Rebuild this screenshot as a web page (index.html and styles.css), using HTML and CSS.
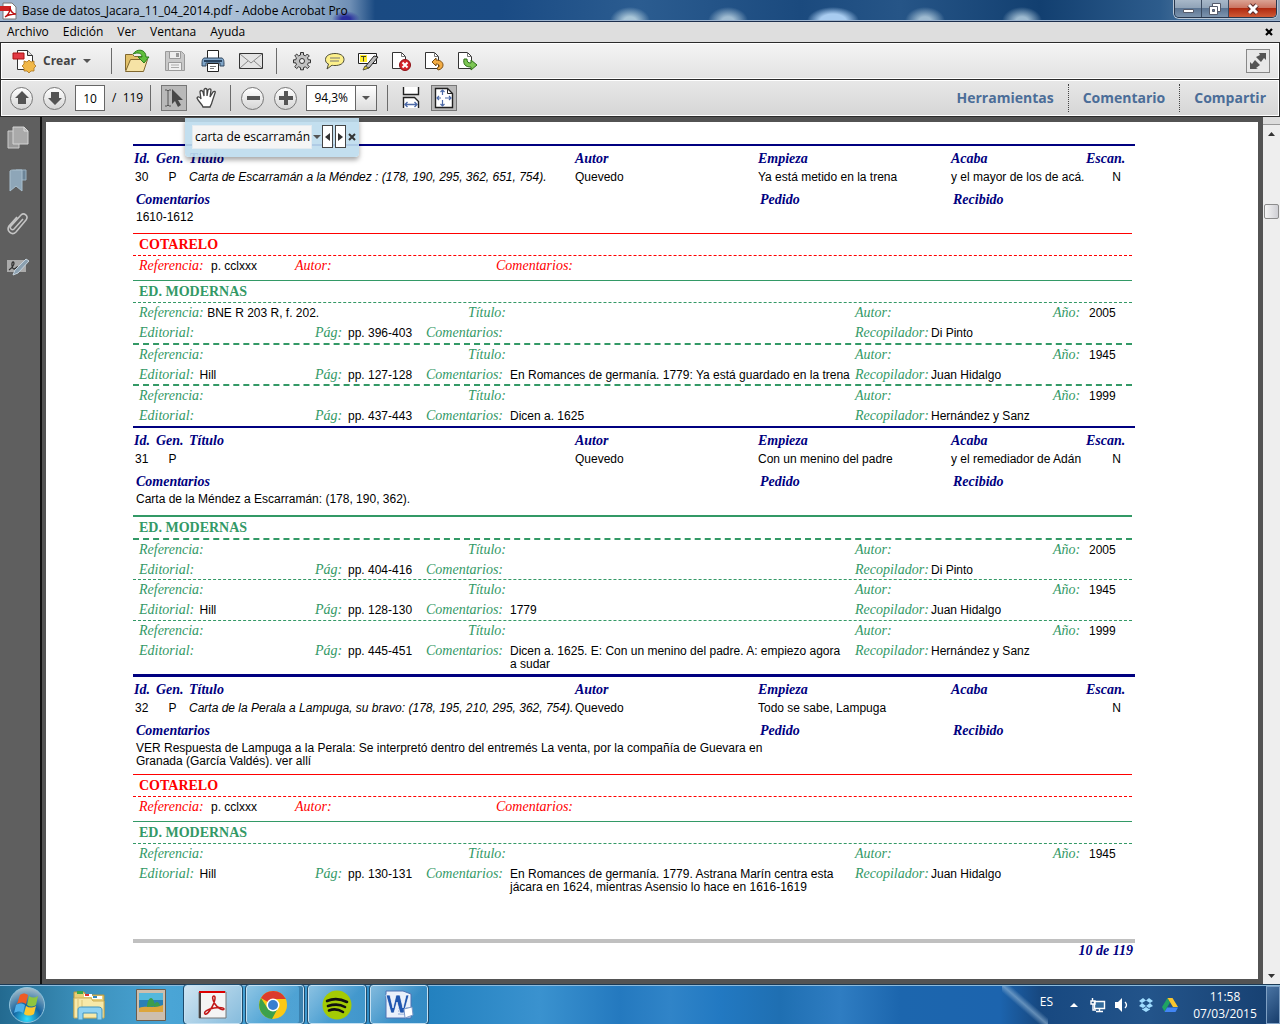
FILE: index.html
```html
<!DOCTYPE html>
<html lang="es">
<head>
  <meta charset="utf-8">
  <title>Base de datos_Jacara_11_04_2014.pdf - Adobe Acrobat Pro</title>
  <link rel="stylesheet" href="styles.css">
</head>
<body>
  <header class="titlebar">
    <svg class="app-icon" width="18" height="18" viewBox="0 0 18 18"><path d="M3 1h9l4 4v12H3z" fill="#fff" stroke="#777"/><path d="M0 4h11v5H0z" fill="#c22"/><path d="M5 15c3-2 5-6 5-9 1 4 3 6 6 6-4 0-8 1-11 3z" fill="none" stroke="#b11" stroke-width="1.4"/></svg>
    <span class="window-title">Base de datos_Jacara_11_04_2014.pdf - Adobe Acrobat Pro</span>
    <div class="window-buttons">
      <button class="win" aria-label="Minimizar"><svg width="14" height="12" viewBox="0 0 14 12"><path d="M2.500 6.500h10v3h-10z" fill="#fff" stroke="#555b6b"/></svg></button>
      <button class="win" aria-label="Restaurar"><svg width="14" height="14" viewBox="0 0 14 14"><path d="M4.500 1.500h8v8h-8z" fill="#fff" stroke="#555b6b"/><path d="M1.500 4.500h8v8h-8z" fill="#fff" stroke="#555b6b"/><path d="M4.500 7.500h2v2h-2z" fill="#68809f" stroke="#555b6b"/></svg></button>
      <button class="win win-close" aria-label="Cerrar"><svg width="14" height="12" viewBox="0 0 14 12"><path d="M3 2l8 8M11 2l-8 8" stroke="#5a2a2a" stroke-width="5"/><path d="M3 2l8 8M11 2l-8 8" stroke="#fff" stroke-width="3"/></svg></button>
    </div>
  </header>

  <nav class="menubar">
    <button>Archivo</button>
    <button>Edición</button>
    <button>Ver</button>
    <button>Ventana</button>
    <button>Ayuda</button>
    <button class="menu-close" aria-label="Cerrar documento"><svg width="8" height="8" viewBox="0 0 8 8"><path d="M1 1l6 6M7 1l-6 6" stroke="#000" stroke-width="2.200"/></svg></button>
  </nav>

  <div class="toolbar toolbar-main">
    <button class="create">
      <svg width="24" height="24" viewBox="0 0 24 24"><path d="M5.500 1.500h10l5 5v14h-15z" fill="#fff" stroke="#333"/><path d="M15.500 1.500v5h5" fill="#ddd" stroke="#333"/><path d="M1 4h11v6H1z" fill="#e23a44" stroke="#a11"/><path d="M17 11l2 2 3-1 0 3 2 2-2 2 0 3-3 0-2 2-2-2-3 0 0-3-2-2 2-2 0-3 3 1z" fill="#f1b848" stroke="#a87420" stroke-width=".8"/></svg>
      <span>Crear</span>
      <i class="caret"></i>
    </button>
    <i class="sep"></i>
    <div class="tools wide">
      <button aria-label="Abrir"><svg width="26" height="24" viewBox="0 0 26 24"><path d="M1.500 21V5.500h7l2 2h9V21z" fill="#e3c26a" stroke="#80672e"/><path d="M1.500 22.500l5-12h17l-4 12z" fill="#f6e3a5" stroke="#80672e"/><path d="M9 5c4-6 13-5 13 3h3l-5 6-6-6h4c0-4-4-5-9-3z" fill="#5fbf3c" stroke="#2b7a1c"/></svg></button>
      <button aria-label="Guardar"><svg width="22" height="22" viewBox="0 0 22 22"><path d="M1.500 1.500h16l3 3v16h-19z" fill="#c9c9c9" stroke="#9a9a9a"/><path d="M5.500 1.500h11v7h-11z" fill="#eee" stroke="#9a9a9a"/><path d="M12 3h3v4h-3z" fill="#999"/><path d="M4.500 12.500h13v8h-13z" fill="#f0f0f0" stroke="#9a9a9a"/><path d="M7 15h8M7 17.500h8" stroke="#aaa"/></svg></button>
      <button aria-label="Imprimir"><svg width="24" height="24" viewBox="0 0 24 24"><path d="M6.500 1.500h11v9h-11z" fill="#fff" stroke="#222"/><path d="M3 9h18c2 1 2 3 2 8h-4v-3H5v3H1c0-5 0-7 2-8z" fill="#7fa5c8" stroke="#31475f"/><path d="M3 12h18" stroke="#29435f" stroke-width="2"/><path d="M6.500 14.500h11v8h-11z" fill="#fff" stroke="#222"/><path d="M9 17.500h6M9 19.500h4" stroke="#777"/></svg></button>
      <button aria-label="Correo"><svg width="26" height="18" viewBox="0 0 26 18"><path d="M1.500 1.500h23v15h-23z" fill="#e4e4e4" stroke="#333"/><path d="M2 2l11 9 11-9M2 16l8-7M24 16l-8-7" fill="none" stroke="#888"/></svg></button>
    </div>
    <i class="sep"></i>
    <div class="tools">
      <button aria-label="Preferencias"><svg width="20" height="20" viewBox="0 0 20 20"><path d="M8.500 1.500h3v2.500l2 .8 1.800-1.800 2 2-1.800 1.800.8 2h2.200v3h-2.200l-.8 2 1.800 1.800-2 2-1.800-1.800-2 .8v2.200h-3v-2.200l-2-.8-1.800 1.800-2-2 1.800-1.800-.8-2H1.500v-3h2.200l.8-2-1.800-1.800 2-2 1.800 1.800 2-.8z" fill="#c2c2c2" stroke="#333"/><circle cx="10" cy="10" r="2.500" fill="#eee" stroke="#333"/></svg></button>
      <button aria-label="Nota"><svg width="22" height="18" viewBox="0 0 22 18"><path d="M11 1.500c5 0 9 2 9 6s-4 6-9 6c-1.500 0-2 0-3-.3L3 17l1.500-5C2 11 1.500 9.500 1.500 7.500c0-4 4.500-6 9.500-6z" fill="#fdf08a" stroke="#4c4c38"/><path d="M6 6h10M6 9h9" stroke="#777"/></svg></button>
      <button aria-label="Resaltar"><svg width="22" height="20" viewBox="0 0 22 20"><path d="M1.500 2.500h18v10h-18z" fill="#fff" stroke="#222"/><path d="M3 4h7v7H3z" fill="#ffee2b"/><path d="M4 5.500h5M6.500 5.500v5" stroke="#443"/><path d="M8 16l9-11 4 1-9 11z" fill="#bbb" stroke="#222"/><path d="M6 19l2-4 4 2z" fill="#e8d028" stroke="#554"/></svg></button>
      <button aria-label="Eliminar página"><svg width="20" height="20" viewBox="0 0 20 20"><path d="M1.500 1.500h9l4 4v12h-13z" fill="#fff" stroke="#333"/><path d="M10.500 1.500v4h4" fill="none" stroke="#777"/><circle cx="14" cy="14" r="5.500" fill="#d6222a" stroke="#8c1217"/><path d="M11.500 11.500l5 5M16.500 11.500l-5 5" stroke="#fff" stroke-width="2"/></svg></button>
      <button aria-label="Girar página"><svg width="20" height="20" viewBox="0 0 20 20"><path d="M1.500 1.500h9l4 4v12h-13z" fill="#fff" stroke="#333"/><path d="M10.500 1.500v4h4" fill="none" stroke="#777"/><path d="M8 11l4-4v2c9 0 9 9 2 10l-1-2c3-1 3-4-1-4v2z" fill="#f3ad45" stroke="#7b4d10"/></svg></button>
      <button aria-label="Extraer página"><svg width="20" height="20" viewBox="0 0 20 20"><path d="M1.500 1.500h9l4 4v12h-13z" fill="#fff" stroke="#333"/><path d="M10.500 1.500v4h4" fill="none" stroke="#777"/><path d="M7 8h3c0 3 1 4 4 4v-3l6 5-6 5v-3c-6 0-8-3-7-8z" fill="#7cc653" stroke="#2d6d17"/></svg></button>
    </div>
    <button class="fullscreen" aria-label="Modo de lectura"><svg width="20" height="20" viewBox="0 0 20 20"><path d="M11 2h7v7l-2-2-3 4-5-5 4-2zM2 11l2 2 3-4 5 5-4 3 2 1H2z" fill="#555"/></svg></button>
  </div>

  <div class="toolbar toolbar-nav">
    <button class="round" aria-label="Página anterior"><svg width="14" height="14" viewBox="0 0 14 14"><path d="M7 0l7 7h-3v6H3V7H0z" fill="#545454"/></svg></button>
    <button class="round" aria-label="Página siguiente"><svg width="14" height="14" viewBox="0 0 14 14"><path d="M7 14l7-7h-3V1H3v6H0z" fill="#545454"/></svg></button>
    <input class="page-number" type="text" value="10" aria-label="Página">
    <span class="page-total">/&nbsp; 119</span>
    <i class="sep"></i>
    <button class="tool active" aria-label="Seleccionar"><svg width="20" height="20" viewBox="0 0 20 20"><path d="M1 2h2l1 1 1-1h2M4 3v14M1 18h2l1-1 1 1h2" fill="none" stroke="#555"/><path d="M8 1l11 11h-5l3 5-3 2-3-6-3 3z" fill="#484848"/></svg></button>
    <button class="tool hand" aria-label="Mano"><svg width="22" height="22" viewBox="0 0 22 22"><path d="M7 20c-1-3-5-6-6-9 1-2 3-1 4 1L4 5c0-2 2-2 3 0l1 4V3c0-2 3-2 3 0v6l1-6c1-2 3-1 3 0l-1 7 3-5c1-1 3-1 2 1l-3 9c0 2-2 4-2 5z" fill="#fff" stroke="#444" stroke-width="1.300"/></svg></button>
    <i class="sep"></i>
    <button class="round" aria-label="Reducir"><svg width="14" height="14" viewBox="0 0 14 14"><path d="M1 5h13v4H1z" fill="#545454"/></svg></button>
    <button class="round" aria-label="Aumentar"><svg width="14" height="14" viewBox="0 0 14 14"><path d="M5 0h4v5h5v4H9v5H5V9H0V5h5z" fill="#545454"/></svg></button>
    <div class="zoom">
      <input type="text" value="94,3%" aria-label="Zoom">
      <button aria-label="Elegir zoom"><i class="caret"></i></button>
    </div>
    <i class="sep"></i>
    <button class="tool" aria-label="Ajustar ancho"><svg width="18" height="22" viewBox="0 0 18 22"><path d="M1.500 0v7.500h15V0" fill="#fff" stroke="#222" stroke-width="1.400"/><path d="M1.500 21V10.500h11l4 4V21" fill="#fff" stroke="#222" stroke-width="1.400"/><path d="M3 17.500h12M5.500 15L3 17.500 5.500 20M12.500 15l2.500 2.500-2.500 2.500" fill="none" stroke="#4d6aa8" stroke-width="1.400"/></svg></button>
    <button class="tool active" aria-label="Página completa"><svg width="20" height="22" viewBox="0 0 20 22"><path d="M1.500 1.500h12l5 5v14h-17z" fill="#fff" stroke="#222" stroke-width="1.400"/><path d="M13.500 1.500v5h5" fill="none" stroke="#222"/><path d="M8.500 3v5M8.500 13v6M3 11h4M11 11h6M6.500 5l2-2 2 2M6.500 17l2 2 2-2M5 9l-2 2 2 2M15 9l2 2-2 2" fill="none" stroke="#4d6aa8" stroke-width="1.200"/></svg></button>
    <div class="panels">
      <button>Herramientas</button>
      <button>Comentario</button>
      <button>Compartir</button>
    </div>
  </div>

  <main class="workspace">
    <aside class="sidebar">
      <button aria-label="Miniaturas"><svg width="22" height="24" viewBox="0 0 22 24"><path d="M1 5h11v17H1z" fill="#999" stroke="#ccc"/><path d="M6 1h11l4 4v13H6z" fill="#aaa" stroke="#d5d5d5"/><path d="M17 1v4h4" fill="none" stroke="#ddd"/></svg></button>
      <button aria-label="Marcadores"><svg width="20" height="24" viewBox="0 0 20 24"><path d="M8 1h10v10h-8z" fill="#6d8598" stroke="#9ab0c0"/><path d="M2 2c1-1 2-1 4-1h8v21l-6-5-6 5z" fill="#8ea6b8" stroke="#a9bfce"/></svg></button>
      <button aria-label="Adjuntos"><svg width="22" height="24" viewBox="0 0 22 24"><path d="M16 7L7 17c-2 2-5-1-3-3L14 3c3-3 8 1 5 5L9 20c-4 4-10-1-7-6l8-9" fill="none" stroke="#c4c4c4" stroke-width="1.600"/></svg></button>
      <button aria-label="Firmas"><svg width="24" height="20" viewBox="0 0 24 20"><path d="M1 3h19v12H1z" fill="#aaa"/><path d="M3 13c5-3 6-8 4-8s-1 7 1 7 2-2 4-2" fill="none" stroke="#333" stroke-width="1.300"/><path d="M7 18l2-5L20 2l3 2-11 12z" fill="#8ba0b0" stroke="#c5d2dc"/></svg></button>
    </aside>

    <section class="viewer">
      <article class="page">
        <section class="record">
          <table class="head">
            <tr><th class="id">Id.</th><th class="gen">Gen.</th><th>Título</th><th class="author">Autor</th><th class="first">Empieza</th><th class="last">Acaba</th><th class="scan">Escan.</th></tr>
            <tr><td>30</td><td>P</td><td>Carta de Escarramán a la Méndez : (178, 190, 295, 362, 651, 754).</td><td>Quevedo</td><td>Ya está metido en la trena</td><td>y el mayor de los de acá.</td><td>N</td></tr>
          </table>
          <div class="notes">
            <h3>Comentarios</h3><h3>Pedido</h3><h3>Recibido</h3>
            <p>1610-1612</p>
          </div>
          <section class="source cotarelo">
            <h2>COTARELO</h2>
            <div class="reference"><em>Referencia:</em><span>p. cclxxx</span><em>Autor:</em><em>Comentarios:</em></div>
          </section>
          <section class="source modern">
            <h2>ED. MODERNAS</h2>
            <div class="edition">
              <div class="ref"><em>Referencia:</em> <span>BNE R 203 R, f. 202.</span></div><em class="tit">Título:</em><em class="aut">Autor:</em><em>Año:</em><span>2005</span>
              <div class="ed"><em>Editorial:</em></div><em>Pág:</em><span>pp. 396-403</span><em>Comentarios:</em><p></p><em>Recopilador:</em><span class="comp">Di Pinto</span>
            </div>
            <div class="edition thick">
              <div class="ref"><em>Referencia:</em></div><em class="tit">Título:</em><em class="aut">Autor:</em><em>Año:</em><span>1945</span>
              <div class="ed"><em>Editorial:</em> <span>Hill</span></div><em>Pág:</em><span>pp. 127-128</span><em>Comentarios:</em><p class="one-line">En Romances de germanía. 1779: Ya está guardado en la trena</p><em>Recopilador:</em><span class="comp">Juan Hidalgo</span>
            </div>
            <div class="edition thick">
              <div class="ref"><em>Referencia:</em></div><em class="tit">Título:</em><em class="aut">Autor:</em><em>Año:</em><span>1999</span>
              <div class="ed"><em>Editorial:</em></div><em>Pág:</em><span>pp. 437-443</span><em>Comentarios:</em><p>Dicen a. 1625</p><em>Recopilador:</em><span class="comp">Hernández y Sanz</span>
            </div>
          </section>
        </section>

        <section class="record">
          <table class="head">
            <tr><th class="id">Id.</th><th class="gen">Gen.</th><th>Título</th><th class="author">Autor</th><th class="first">Empieza</th><th class="last">Acaba</th><th class="scan">Escan.</th></tr>
            <tr><td>31</td><td>P</td><td></td><td>Quevedo</td><td>Con un menino del padre</td><td>y el remediador de Adán</td><td>N</td></tr>
          </table>
          <div class="notes">
            <h3>Comentarios</h3><h3>Pedido</h3><h3>Recibido</h3>
            <p>Carta de la Méndez a Escarramán: (178, 190, 362).</p>
          </div>
          <section class="source modern heavy">
            <h2>ED. MODERNAS</h2>
            <div class="edition thick">
              <div class="ref"><em>Referencia:</em></div><em class="tit">Título:</em><em class="aut">Autor:</em><em>Año:</em><span>2005</span>
              <div class="ed"><em>Editorial:</em></div><em>Pág:</em><span>pp. 404-416</span><em>Comentarios:</em><p></p><em>Recopilador:</em><span class="comp">Di Pinto</span>
            </div>
            <div class="edition">
              <div class="ref"><em>Referencia:</em></div><em class="tit">Título:</em><em class="aut">Autor:</em><em>Año:</em><span>1945</span>
              <div class="ed"><em>Editorial:</em> <span>Hill</span></div><em>Pág:</em><span>pp. 128-130</span><em>Comentarios:</em><p>1779</p><em>Recopilador:</em><span class="comp">Juan Hidalgo</span>
            </div>
            <div class="edition">
              <div class="ref"><em>Referencia:</em></div><em class="tit">Título:</em><em class="aut">Autor:</em><em>Año:</em><span>1999</span>
              <div class="ed"><em>Editorial:</em></div><em>Pág:</em><span>pp. 445-451</span><em>Comentarios:</em><p>Dicen a. 1625. E: Con un menino del padre. A: empiezo agora a sudar</p><em>Recopilador:</em><span class="comp">Hernández y Sanz</span>
            </div>
          </section>
        </section>

        <section class="record heavy">
          <table class="head">
            <tr><th class="id">Id.</th><th class="gen">Gen.</th><th>Título</th><th class="author">Autor</th><th class="first">Empieza</th><th class="last">Acaba</th><th class="scan">Escan.</th></tr>
            <tr><td>32</td><td>P</td><td>Carta de la Perala a Lampuga, su bravo: (178, 195, 210, 295, 362, 754).</td><td>Quevedo</td><td>Todo se sabe, Lampuga</td><td></td><td>N</td></tr>
          </table>
          <div class="notes">
            <h3>Comentarios</h3><h3>Pedido</h3><h3>Recibido</h3>
            <p>VER Respuesta de Lampuga a la Perala: Se interpretó dentro del entremés La venta, por la compañía de Guevara en Granada (García Valdés). ver allí</p>
          </div>
          <section class="source cotarelo">
            <h2>COTARELO</h2>
            <div class="reference"><em>Referencia:</em><span>p. cclxxx</span><em>Autor:</em><em>Comentarios:</em></div>
          </section>
          <section class="source modern">
            <h2>ED. MODERNAS</h2>
            <div class="edition">
              <div class="ref"><em>Referencia:</em></div><em class="tit">Título:</em><em class="aut">Autor:</em><em>Año:</em><span>1945</span>
              <div class="ed"><em>Editorial:</em> <span>Hill</span></div><em>Pág:</em><span>pp. 130-131</span><em>Comentarios:</em><p>En Romances de germanía. 1779. Astrana Marín centra esta jácara en 1624, mientras Asensio lo hace en 1616-1619</p><em>Recopilador:</em><span class="comp">Juan Hidalgo</span>
            </div>
          </section>
        </section>

        <footer class="page-footer">10 de 119</footer>
      </article>

      <form class="find">
        <input type="text" value="carta de escarramán" aria-label="Buscar">
        <button type="button" class="find-menu" aria-label="Opciones"><i class="caret"></i></button>
        <button type="button" class="find-step" aria-label="Anterior"><svg width="5" height="8" viewBox="0 0 5 8"><path d="M5 0v8L0 4z" fill="#333"/></svg></button>
        <button type="button" class="find-step" aria-label="Siguiente"><svg width="5" height="8" viewBox="0 0 5 8"><path d="M0 0v8l5-4z" fill="#333"/></svg></button>
        <button type="button" class="find-close" aria-label="Cerrar búsqueda"><svg width="8" height="8" viewBox="0 0 8 8"><path d="M1 1l6 6M7 1l-6 6" stroke="#333" stroke-width="2"/></svg></button>
      </form>
    </section>

    <div class="scrollbar">
      <i class="split"></i>
      <button aria-label="Subir"><svg width="7" height="4" viewBox="0 0 7 4"><path d="M0 4l3.500-4L7 4z" fill="#333"/></svg></button>
      <div class="track"><i class="thumb"></i></div>
      <button aria-label="Bajar"><svg width="7" height="4" viewBox="0 0 7 4"><path d="M0 0l3.500 4L7 0z" fill="#333"/></svg></button>
    </div>
  </main>

  <footer class="taskbar">
    <button class="start" aria-label="Inicio"><svg width="38" height="38" viewBox="0 0 38 38"><defs><radialGradient id="orb" cx=".5" cy=".9" r=".9"><stop offset="0" stop-color="#2fe0ff"/><stop offset=".45" stop-color="#14629e"/><stop offset="1" stop-color="#a9bfca"/></radialGradient></defs><circle cx="19" cy="19" r="17.500" fill="url(#orb)" stroke="#8fc3dc"/><path d="M12 9c3-2 5-2 8 0l-2 9c-3-2-5-2-9 0z" fill="#ee5b25"/><path d="M21 10c3 2 6 2 9 0l-2 9c-3 2-6 2-9 0z" fill="#8fc63f"/><path d="M8 19c4-2 6-2 9 0l-2 8c-3-2-5-2-9 0z" fill="#4fb0ea"/><path d="M18 20c3 2 6 2 10 0l-2 8c-3 2-7 2-10 0z" fill="#fdc82f"/></svg></button>
    <button class="task" aria-label="Explorador"><svg width="34" height="32" viewBox="0 0 34 32"><path d="M2 3h10l2 3h18v22H2z" fill="#e9cf77" stroke="#b8963e"/><path d="M5 2h6v3H5z" fill="#3aa84a"/><path d="M12 5h8v3h-8z" fill="#fff"/><path d="M13 5h4v2h-4z" fill="#d33"/><path d="M20 7h10v3H20z" fill="#fff"/><path d="M21 7h4v2h-4z" fill="#38b"/><path d="M2 9h17l2 3h11v17H2z" fill="#f7e9a9" stroke="#cdae57"/><path d="M10 11v17M6 10v18" stroke="#d9c378"/><path d="M6 31V21c0-3 2-3 4-3h16c3 0 4 1 4 3v10h-5v-7H11v7z" fill="#8fd2f2" stroke="#3f93bf"/></svg></button>
    <button class="task" aria-label="Fotos"><svg width="30" height="32" viewBox="0 0 30 32"><path d="M.5 .5h29v31H.5z" fill="#cdbfae" stroke="#6c5c4c"/><path d="M3 4h24v19H3z" fill="#2a7fb5"/><path d="M3 4h24v7H3z" fill="#54b8dc"/><path d="M3 19c8-3 13 1 24-3v7H3z" fill="#dca63c"/><path d="M11 18c0-5 2-9 4-9s4 5 4 8zM18 18c0-3 2-5 3-5s3 2 3 4z" fill="#3b9c4c"/></svg></button>
    <button class="task open current" aria-label="Adobe Acrobat"><svg width="30" height="30" viewBox="0 0 30 30"><path d="M1 2h27v26H1z" fill="#f4f4f4" stroke="#777"/><path d="M1 1h26v2H1z" fill="#d00"/><path d="M1 3h2v25H1z" fill="#444"/><path d="M7 24c-2-2 3-5 9-6s10 0 10 1c0 2-6 0-9-5s-3-8-1-8 1 6-2 11-5 8-7 7z" fill="none" stroke="#c21818" stroke-width="1.500"/></svg></button>
    <button class="task open stack" aria-label="Chrome"><svg width="30" height="30" viewBox="0 0 30 30"><circle cx="15" cy="15" r="14" fill="#fbc916"/><path d="M15 15L3 8a14 14 0 0 1 24.500 0.500L28 9H15z" fill="#dc3c2c"/><path d="M3 8a14 14 0 0 0 11 21l6-11-10 1z" fill="#3da14b"/><circle cx="15" cy="15" r="6.500" fill="#fff"/><circle cx="15" cy="15" r="5" fill="#3a7fd0"/></svg></button>
    <button class="task open" aria-label="Spotify"><svg width="30" height="30" viewBox="0 0 30 30"><circle cx="15" cy="15" r="14.500" fill="#a4cb05"/><path d="M5 11c7-3 14-2 20 1M6 16c6-2 12-2 17 1M7 20.500c5-2 10-1 14 1.500" fill="none" stroke="#111" stroke-width="2.600" stroke-linecap="round"/></svg></button>
    <button class="task open" aria-label="Word"><svg width="30" height="30" viewBox="0 0 30 30"><path d="M2 1h17l8 3v24H2z" fill="#e9f0fb" stroke="#4e73b4"/><path d="M14 18h13M14 21h13M14 24h13" stroke="#88a4d4"/><path d="M2 5h4l3 13 3-13h4l3 13 3-13h3l-5 18h-4l-3-11-3 11H7z" fill="#1f56b0" stroke="#fff" stroke-width=".7"/><path d="M20 19l8-2 1 8-8 3z" fill="#fff" stroke="#7b98c8"/></svg></button>
    <div class="tray">
      <span class="lang">ES</span>
      <svg width="8" height="4" viewBox="0 0 8 4"><path d="M0 4l4-4 4 4z" fill="#fff"/></svg>
      <svg width="16" height="16" viewBox="0 0 16 16"><path d="M4.500 4.500h10v7h-10z" fill="#336b9c" stroke="#fff" stroke-width="1.400"/><path d="M9.500 12v2M6 14.500h7M2.500 1v3M1 4h4v3H1zM3 7v6h3" fill="none" stroke="#fff" stroke-width="1.400"/></svg>
      <svg width="16" height="16" viewBox="0 0 16 16"><path d="M1 5h3l4-4v14l-4-4H1z" fill="#fff"/><path d="M11 5c2 2 2 4 0 6" fill="none" stroke="#fff" stroke-width="1.300"/></svg>
      <svg width="16" height="14" viewBox="0 0 16 14"><path d="M5 0l3 2.500L4 5 1 3zM11 0l4 3-3 2-4-2.500zM1 8l3-3 4 3-3 2zM15 8l-3-3-4 3 3 2zM4 10.500l1 .5 3-2 3 2 1-.5v1L8 14l-4-2.500z" fill="#9fdcff"/></svg>
      <svg width="16" height="14" viewBox="0 0 16 14"><path d="M5.500 0L0 9l2.500 4.500L8 4.500z" fill="#1fa463"/><path d="M5.500 0h5L16 9h-5z" fill="#fbc52d"/><path d="M5 9.500h11L13.500 14h-11z" fill="#4285f4"/></svg>
      <div class="clock"><span>11:58</span><span>07/03/2015</span></div>
    </div>
    <button class="show-desktop" aria-label="Mostrar escritorio"></button>
  </footer>
</body>
</html>
```
FILE: styles.css
```css
* {
  box-sizing: border-box;
  margin: 0;
  padding: 0;
}

body {
  min-height: 100vh;
  display: flex;
  flex-direction: column;
  font: 12px/16px "Open Sans", "Noto Sans", sans-serif;
  color: #000;
  background: #535353;
}

button {
  display: flex;
  align-items: center;
  justify-content: center;
  border: none;
  background: none;
  font: inherit;
  color: inherit;
}

svg {
  display: block;
  flex: none;
}

/* window frame */
.titlebar {
  display: flex;
  align-items: center;
  height: 22px;
  gap: 4px;
  border-bottom: 1px solid #1d2f4d;
  box-shadow: inset 0 -1px #9db4cf;
  background:
    radial-gradient(ellipse 20px 14px at 630px 21px, #a9c6d8 30%, transparent),
    radial-gradient(ellipse 20px 14px at 728px 21px, #a0bcd2 30%, transparent),
    radial-gradient(ellipse 26px 14px at 833px 21px, #a8ccf0 50%, transparent),
    radial-gradient(ellipse 20px 14px at 925px 21px, #9dbad0 30%, transparent),
    radial-gradient(ellipse 20px 14px at 1022px 21px, #9dbad0 30%, transparent),
    radial-gradient(ellipse 14px 8px at 346px 19px, #2a2f9e 30%, transparent),
    linear-gradient(90deg, #9fb4cc 0, #b3c6da 200px, #93aecb 310px, #6f8fb5 350px, #1a4a82 375px, #1a4b84 500px, #2b5c90 640px, #1b4a7e 800px, #265587 900px, #123f70 1040px, #2d5c8c 1160px, #8fa7bd 1280px);
}

.window-buttons {
  display: flex;
  align-self: flex-start;
  margin: 0 3px 0 auto;
  border: 1px solid #28374d;
  border-top: none;
  border-radius: 0 0 5px 5px;
  box-shadow: 0 0 0 1px #b9c7d6;
  overflow: hidden;
}

.win {
  width: 27px;
  height: 17px;
  border-right: 1px solid #3a4a60;
  background: linear-gradient(#a8b8c9, #8ea1b6 50%, #5c7593 50%, #7c94ae);
}

.win-close {
  width: 47px;
  border: none;
  background: linear-gradient(#dba394, #c9705c 50%, #b02a10 50%, #cf5a35);
}

.menubar {
  display: flex;
  align-items: center;
  gap: 14px;
  height: 20px;
  padding: 0 7px 1px;
  background: #dedede;
}

.menu-close {
  margin-left: auto;
}

/* toolbars */
.toolbar {
  display: flex;
  align-items: center;
  border: 1px solid #2b2b2b;
  border-width: 1px 1px 0;
  box-shadow: inset 0 0 0 1px #fff;
  background: linear-gradient(#f4f4f4, #e2e2e2);
}

.toolbar-main {
  height: 37px;
  padding: 0 9px 0 11px;
}

.toolbar-nav {
  height: 38px;
  padding: 0 13px 0 9px;
  border-bottom-width: 1px;
  background: linear-gradient(#e8e8e8, #d6d6d6);
}

.sep {
  flex: none;
  width: 1px;
  height: 26px;
  background: #6b6b6b;
}

.caret {
  border: 4px solid transparent;
  border-top-color: #555;
  border-bottom: none;
}

.create {
  gap: 7px;
  margin-right: 20px;
  font-size: 12px;
  font-weight: bold;
  color: #444;
}

.tools {
  display: flex;
  margin: 0 9px;
}

.tools button {
  width: 33px;
}

.tools.wide {
  margin: 0 6px;
}

.tools.wide button {
  width: 38px;
}

.fullscreen {
  width: 24px;
  height: 24px;
  margin-left: auto;
  border: 1px solid #888;
  background: #e8e8e8;
}

.round {
  width: 23px;
  height: 23px;
  margin-right: 10px;
  border: 1px solid #777;
  border-radius: 50%;
  background: linear-gradient(#fff, #d5d5d5);
}

.page-number {
  width: 30px;
  height: 26px;
  margin-left: -1px;
  border: 1px solid #666;
  background: #fff;
  font: inherit;
  text-align: center;
}

.page-total {
  margin: 0 7px;
}

.tool {
  width: 26px;
  height: 26px;
  margin: 0 7px 0 0;
}

.hand {
  margin-right: 10px;
}

.toolbar-nav .sep {
  margin-right: 10px;
}

.active {
  border: 1px solid #777;
  background: #b9b9b9;
}

.zoom {
  display: flex;
  height: 26px;
  margin: 0 10px 0 -1px;
  border: 1px solid #666;
  background: #fff;
}

.zoom input {
  width: 48px;
  border: none;
  font: inherit;
  text-align: center;
}

.zoom button {
  width: 21px;
  border-left: 1px solid #666;
  background: linear-gradient(#fff, #dcdcdc);
}

.panels {
  display: flex;
  margin-left: auto;
}

.panels button {
  height: 28px;
  padding: 0 14px;
  border-right: 1px dotted #444;
  font-size: 14px;
  font-weight: bold;
  color: #4b6d98;
}

.panels button:last-child {
  padding-right: 0;
  border: none;
}

/* document area */
.workspace {
  flex: 1;
  display: flex;
}

.sidebar {
  display: flex;
  flex-direction: column;
  align-items: center;
  gap: 19px;
  width: 42px;
  padding: 9px 4px 0 0;
  border-right: 2px solid #111;
  background: #5f5f5f;
}

.sidebar button {
  height: 24px;
}

.viewer {
  position: relative;
  flex: 1;
  display: flex;
  padding: 5px 5px 5px 4px;
  background: #535353;
}

.page {
  flex: 1;
  display: flex;
  flex-direction: column;
  padding: 22px 123px 21px 87px;
  background: #fff;
  font: 12px/18px "Liberation Sans", Arial, sans-serif;
}

.record {
  padding-top: 4px;
  border-top: 2px solid navy;
}

.record.heavy {
  border-top-width: 3px;
}

.head {
  width: 100%;
  table-layout: fixed;
  border-collapse: collapse;
}

.head th,
.head td {
  height: 18px;
  text-align: left;
  white-space: nowrap;
}

.head th,
.notes h3,
.page-footer {
  font: italic bold 14px/18px "Liberation Serif", "Times New Roman", serif;
  color: navy;
}

.head .id { width: 23px; }
.head .gen { width: 33px; }
.head .author { width: 183px; }
.head .first { width: 193px; }
.head .last { width: 135px; }
.head .scan { width: 49px; }

.head th:first-child {
  padding-left: 1px;
}

.head td:first-child {
  padding-left: 2px;
}

.head td:nth-child(2) {
  text-align: center;
}

.head td:nth-child(3) {
  font-style: italic;
}

.head td:last-child {
  padding-left: 12px;
  text-align: center;
}

.notes {
  display: grid;
  grid-template-columns: 1fr 193px 182px;
  padding: 5px 0 0 3px;
}

.notes p {
  grid-column: 1 / 3;
  min-height: 24px;
  padding: 2px 170px 6px 0;
  line-height: 13px;
}

.source {
  margin-right: 3px;
  border-top: 1px solid;
}

.source.heavy {
  border-top-width: 2px;
}

.cotarelo {
  color: #f00;
}

.modern {
  color: #339966;
}

.source h2 {
  padding-left: 6px;
  font: bold 14px/21px "Liberation Serif", "Times New Roman", serif;
}

.source em {
  font: italic 14px/20px "Liberation Serif", "Times New Roman", serif;
}

.source span,
.source p {
  color: #000;
}

.reference {
  display: grid;
  grid-template-columns: 72px 84px 201px 1fr;
  height: 25px;
  padding-left: 6px;
  border-top: 1px dashed;
  line-height: 20px;
}

.edition {
  display: grid;
  grid-template-columns: 176px 33px 78px 84px 1fr 76px 122px 36px 43px;
  grid-template-rows: 20px minmax(19px, auto);
  min-height: 41px;
  padding-left: 6px;
  border-top: 1px dashed;
  line-height: 20px;
}

.edition > em,
.edition > span,
.edition > div {
  height: 19px;
}

.edition.thick {
  border-top-width: 2px;
}

.edition .ref {
  grid-column: 1 / 4;
}

.edition .tit {
  padding-right: 4px;
  text-align: right;
}

.edition .aut {
  grid-column: 6 / 8;
}

.edition .comp {
  grid-column: 7 / -1;
}

.edition .ed span {
  padding-left: 2px;
}

.edition p {
  padding: 4px 10px 3px 0;
  line-height: 13px;
}

.edition .one-line {
  padding-right: 0;
  padding-bottom: 0;
  white-space: nowrap;
}

.page-footer {
  margin-top: auto;
  padding-right: 2px;
  border-top: 4px solid #c0c0c0;
  line-height: 15px;
  text-align: right;
}

/* find box floats over the page */
.find {
  position: absolute;
  top: 1px;
  left: 143px;
  display: flex;
  align-items: center;
  height: 39px;
  padding: 0 3px 2px 7px;
  border-radius: 0 0 4px 4px;
  background: rgba(190, 220, 238, 0.92);
  box-shadow: 0 3px 5px rgba(0, 0, 0, 0.35);
}

.find input {
  width: 120px;
  height: 24px;
  padding-left: 2px;
  border: 1px solid #e4ebf0;
  background: #f5f5f5;
  font: inherit;
}

.find-menu {
  width: 10px;
}

.find-step {
  width: 11px;
  height: 23px;
  margin-right: 2px;
  border: 1px solid #444;
  background: #fff;
}

.scrollbar {
  display: flex;
  flex-direction: column;
  width: 17px;
  background: #eee;
}

.scrollbar button {
  height: 17px;
}

.split {
  height: 8px;
  border-bottom: 1px solid #999;
  background: #ddd;
}

.track {
  flex: 1;
  padding: 62px 1px 0;
}

.thumb {
  display: block;
  height: 15px;
  border: 1px solid #8c8c8c;
  border-radius: 2px;
  background: linear-gradient(90deg, #f6f6f6, #cfcfd4);
}

/* taskbar */
.taskbar {
  display: flex;
  align-items: center;
  height: 40px;
  border-top: 1px solid #1c3a55;
  box-shadow: inset 0 1px #8dbbdc;
  background:
    linear-gradient(to top right, transparent 41%, rgba(150, 185, 215, 0.6) 50%, transparent 59%) 1002px 0 / 46px 40px no-repeat,
    linear-gradient(90deg, #236a90 0, #3b8fba 80px, #4aa5d6 170px, #3f9ad0 300px, #2381bf 430px, #3a92cf 540px, #2479bf 620px, #3084c8 670px, #2279c2 720px, #1f6fb2 780px, #2f7dc2 840px, #1c66ae 900px, #1c64ae 1000px, #174880 1040px, #23548a 1150px, #163f70 1280px);
}

.start {
  width: 54px;
}

.task {
  width: 58px;
  height: 39px;
  margin-left: 4px;
}

.start + .task {
  margin-left: 6px;
}

.open {
  border: 1px solid #c4e0f2;
  border-radius: 3px;
  outline: 1px solid #1e4a6b;
  background: linear-gradient(135deg, rgba(255, 255, 255, 0.4), rgba(255, 255, 255, 0.08) 60%);
}

.current {
  background: linear-gradient(135deg, #cfe4f1, #86bcdd);
}

.stack {
  padding-right: 5px;
  box-shadow: inset -4px 0 rgba(30, 80, 120, 0.4);
}

.tray {
  display: flex;
  align-items: center;
  gap: 8px;
  margin-left: auto;
  color: #fff;
}

.tray svg:first-of-type {
  margin-right: 4px;
}

.lang {
  margin: -6px 9px 0 0;
}

.clock {
  display: flex;
  flex-direction: column;
  width: 72px;
  margin: 0 5px 0 3px;
  line-height: 17px;
  text-align: center;
}

.show-desktop {
  width: 14px;
  height: 38px;
  border: 1px solid #7fa0c4;
  background: linear-gradient(135deg, #4a74a3, #173d6c);
}
```
